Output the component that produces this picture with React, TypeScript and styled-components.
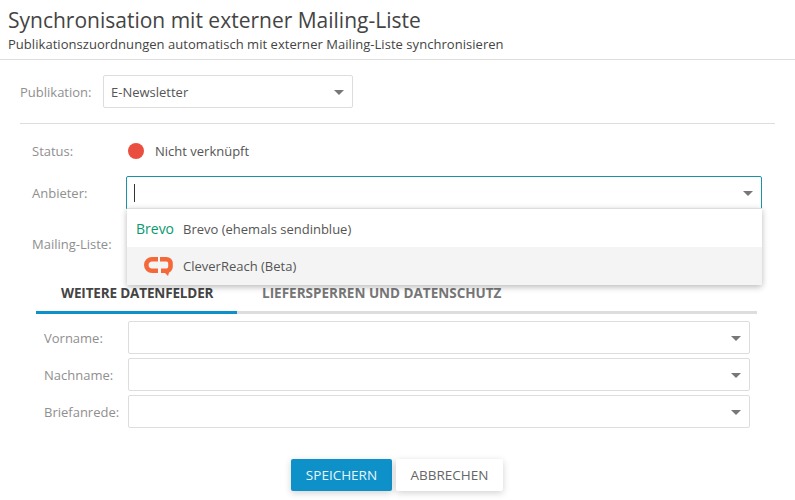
import styled, { createGlobalStyle } from "styled-components";

const GlobalStyle = createGlobalStyle`
  * { box-sizing: border-box; }
  html, body { margin: 0; padding: 0; background: #fff; }
  body { font-family: "Open Sans", sans-serif; font-size: 13px; color: #555; overflow: hidden; }
`;

const Page = styled.div`
  width: 795px;
  height: 500px;
  display: flex;
  flex-direction: column;
`;

const Header = styled.header`
  height: 60px;
  padding: 6px 8px 0;
  border-bottom: 1px solid #ddd;
`;

const Title = styled.h1`
  margin: 0;
  font-size: 21px;
  line-height: 28px;
  font-weight: 400;
  color: #444;
`;

const Subtitle = styled.p`
  margin: 0;
  font-size: 13px;
  line-height: 20px;
  letter-spacing: 0.04px;
  color: #444;
`;

const PublicationRow = styled.div`
  display: flex;
  align-items: center;
  padding: 15px 0 15px 20px;
  margin: 0 20px 0 0;
`;

const Divider = styled.hr`
  margin: 0 20px;
  border: 0;
  border-top: 1px solid #ddd;
`;

const Label = styled.label<{ $width: number }>`
  width: ${(p) => p.$width}px;
  flex: none;
  color: #8f8f8f;
  font-size: 13px;
`;

const SelectBox = styled.div<{ $focused?: boolean; $width?: number }>`
  position: relative;
  flex: ${(p) => (p.$width ? "none" : "1")};
  width: ${(p) => (p.$width ? `${p.$width}px` : "auto")};
  height: 33px;
  display: flex;
  align-items: center;
  padding: 0 8px 0 7px;
  background: #fff;
  border: 1px solid ${(p) => (p.$focused ? "#1a93a8" : "#ddd")};
  border-radius: ${(p) => (p.$focused ? "2px 2px 0 0" : "2px")};
  color: #555;
`;

const SelectValue = styled.span`
  flex: 1;
`;

const Caret = styled.span`
  width: 0;
  height: 0;
  margin-top: 2px;
  border-left: 5px solid transparent;
  border-right: 5px solid transparent;
  border-top: 5px solid #777;
`;

const TextCursor = styled.span`
  width: 1px;
  height: 18px;
  background: #333;
`;

const Form = styled.div`
  position: relative;
  padding: 0 33px 0 32px;
`;

const FormRow = styled.div<{ $height: number; $top: number }>`
  display: flex;
  align-items: center;
  height: ${(p) => p.$height}px;
  margin-top: ${(p) => p.$top}px;
`;

const StatusDot = styled.span`
  width: 16px;
  height: 16px;
  margin: 0 11px 0 2px;
  border-radius: 50%;
  background: #e94e3f;
`;

const StatusText = styled.span`
  color: #555;
`;

const Dropdown = styled.ul`
  position: absolute;
  top: 84px;
  left: 127px;
  width: 635px;
  margin: 0;
  padding: 0;
  list-style: none;
  background: #fff;
  border-radius: 0 0 2px 2px;
  border-top: 1px solid #ddd;
  box-shadow: 0 2px 6px rgba(0, 0, 0, 0.28);
  z-index: 2;
`;

const Option = styled.li<{ $hover?: boolean }>`
  display: flex;
  align-items: center;
  height: ${(p) => (p.$hover ? 38 : 38)}px;
  padding: ${(p) => (p.$hover ? "0 0 1px 9px" : "1px 0 0 9px")};
  background: ${(p) => (p.$hover ? "#f4f4f4" : "#fff")};
`;

const LogoSlot = styled.span`
  width: 47px;
  flex: none;
  display: flex;
  justify-content: flex-end;
  padding-right: 10px;
`;

const BrevoLogo = styled.span`
  width: 47px;
  flex: none;
  color: #0b996e;
  font-size: 14px;
  font-weight: 500;
  line-height: 20px;
`;

const Tabs = styled.div`
  display: flex;
  height: 39px;
  margin: 15px 38px 0 36px;
  border-bottom: 3px solid #ddd;
`;

const Tab = styled.div<{ $active?: boolean }>`
  width: ${(p) => (p.$active ? "201px" : "auto")};
  height: 39px;
  padding: 9px 0 0 25px;
  font-size: 13.5px;
  line-height: 18px;
  font-weight: 700;
  letter-spacing: ${(p) => (p.$active ? "-0.15px" : "0")};
  text-transform: uppercase;
  color: ${(p) => (p.$active ? "#444" : "#777")};
  border-bottom: 3px solid ${(p) => (p.$active ? "#0e90c8" : "transparent")};
`;

const Fields = styled.div`
  display: flex;
  flex-direction: column;
  gap: 4px;
  margin: 7px 45px 0 44px;
`;

const FieldRow = styled.div`
  display: flex;
  align-items: center;
`;

const Footer = styled.footer`
  display: flex;
  justify-content: center;
  gap: 4px;
  margin: 31px 1px 0 0;
`;

const Button = styled.button<{ $primary?: boolean }>`
  height: 32px;
  padding: 0;
  width: ${(p) => (p.$primary ? "101px" : "107px")};
  border: 0;
  border-radius: 2px;
  font-family: inherit;
  font-size: 13.5px;
  text-transform: uppercase;
  background: ${(p) => (p.$primary ? "#0e90c8" : "#fff")};
  color: ${(p) => (p.$primary ? "#e6f6fc" : "#666")};
  box-shadow: 0 2px 7px rgba(0, 0, 0, 0.18);
`;

const fields = ["Vorname:", "Nachname:", "Briefanrede:"];

export default function App() {
  return (
    <Page>
      <GlobalStyle />
      <Header>
        <Title>Synchronisation mit externer Mailing-Liste</Title>
        <Subtitle>Publikationszuordnungen automatisch mit externer Mailing-Liste synchronisieren</Subtitle>
      </Header>
      <PublicationRow>
        <Label $width={83}>Publikation:</Label>
        <SelectBox $width={250}>
          <SelectValue>E-Newsletter</SelectValue>
          <Caret />
        </SelectBox>
      </PublicationRow>
      <Divider />
      <Form>
        <FormRow $height={32} $top={11}>
          <Label $width={94}>Status:</Label>
          <StatusDot />
          <StatusText>Nicht verknüpft</StatusText>
        </FormRow>
        <FormRow $height={33} $top={9}>
          <Label $width={94}>Anbieter:</Label>
          <SelectBox $focused>
            <TextCursor />
            <SelectValue />
            <Caret />
          </SelectBox>
        </FormRow>
        <Dropdown>
          <Option>
            <BrevoLogo>Brevo</BrevoLogo>
            Brevo (ehemals sendinblue)
          </Option>
          <Option $hover>
            <LogoSlot>
              <svg width="29" height="20" viewBox="0 0 29 20" fill="none" stroke="#f4693a" strokeWidth="4.6">
                <path d="M14 3.3H8a5.7 5.7 0 0 0 0 11.4h6" />
                <path d="M16 3.3h6.5a4 4 0 0 1 4 4v3.4a4 4 0 0 1-4 4H17" />
                <path d="M19 15l5 5 1.5-5z" fill="#f4693a" stroke="none" />
              </svg>
            </LogoSlot>
            CleverReach (Beta)
          </Option>
        </Dropdown>
        <FormRow $height={32} $top={19}>
          <Label $width={94}>Mailing-Liste:</Label>
        </FormRow>
      </Form>
      <Tabs>
        <Tab $active>Weitere Datenfelder</Tab>
        <Tab>Liefersperren und Datenschutz</Tab>
      </Tabs>
      <Fields>
        {fields.map((name) => (
          <FieldRow key={name}>
            <Label $width={84}>{name}</Label>
            <SelectBox>
              <SelectValue />
              <Caret />
            </SelectBox>
          </FieldRow>
        ))}
      </Fields>
      <Footer>
        <Button $primary>Speichern</Button>
        <Button>Abbrechen</Button>
      </Footer>
    </Page>
  );
}
